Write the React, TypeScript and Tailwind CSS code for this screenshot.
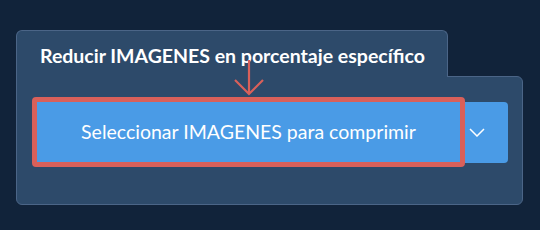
import React from "react";

function ChevronDown() {
  return (
    <svg width="16" height="9" viewBox="0 0 16 9" fill="none">
      <polyline points="1,1 8,8 15,1" stroke="white" strokeWidth="1.5" />
    </svg>
  );
}

function DownArrow() {
  return (
    <svg width="30" height="36" viewBox="0 0 30 36" fill="none">
      <path d="M15 0 V34 M1 20 L15 34 L29 20" stroke="#d9605a" strokeWidth="2.2" />
    </svg>
  );
}

export default function App() {
  return (
    <div className="w-[540px] h-[230px] bg-[#11233a] pt-[30px] pl-[16px] font-['Lato',sans-serif]">
      <div className="relative w-[507px]">
        {/* Tab */}
        <div className="relative z-10 w-[432px] h-[47px] -mb-px bg-[#2d4a6a] border border-b-0 border-[#4b6587] rounded-t-[6px] pl-[23px] pt-[12px]">
          <span className="block text-[19.5px] leading-[26px] font-bold text-white">
            Reducir IMAGENES en porcentaje específico
          </span>
        </div>

        {/* Panel */}
        <div className="h-[129px] bg-[#2d4a6a] border border-[#4b6587] rounded-b-[6px] rounded-tr-[6px] pl-[20px] pt-[25px]">
          <div className="flex">
            <button className="relative z-10 w-[423px] h-[60px] bg-[#4a9be6] text-white text-[19.5px] flex items-center justify-center">
              Seleccionar IMAGENES para comprimir
              <span className="absolute -inset-[5px] border-[5px] border-[#d9605a] rounded-[4px] pointer-events-none" />
            </button>
            <button className="w-[48px] h-[61px] bg-[#4a9be6] rounded-r-[4px] flex items-center pl-[9px]">
              <ChevronDown />
            </button>
          </div>
        </div>

        {/* Annotation arrow */}
        <div className="absolute left-[218px] top-[30px] z-20">
          <DownArrow />
        </div>
      </div>
    </div>
  );
}
